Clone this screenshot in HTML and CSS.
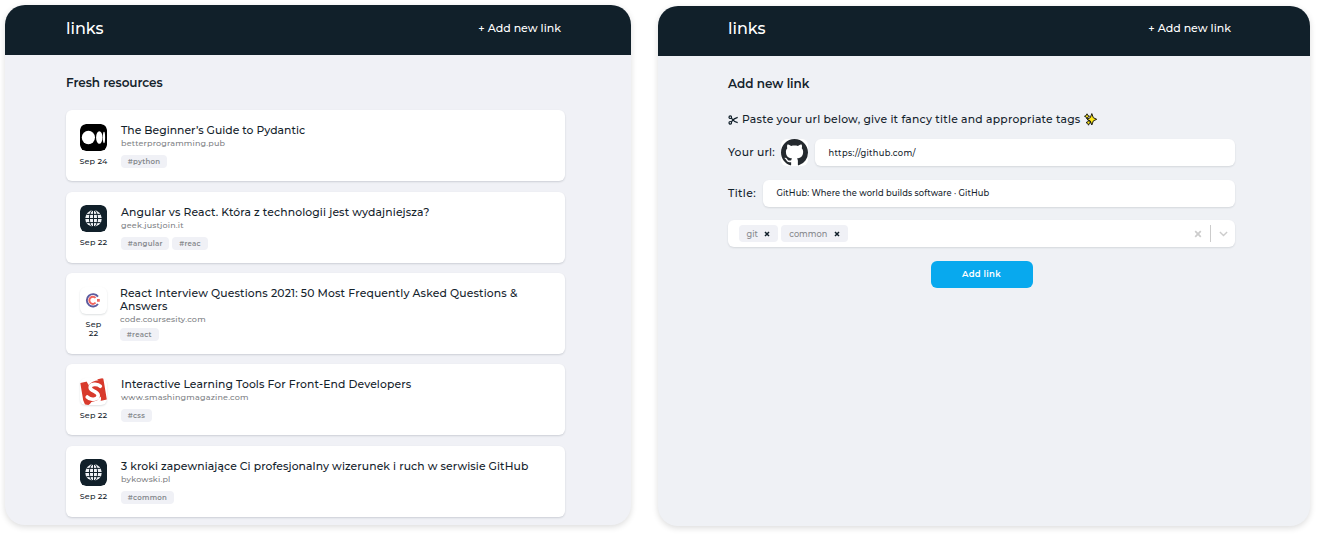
FILE: index.html
```html
<!DOCTYPE html>
<html lang="en">
<head>
<meta charset="utf-8">
<title>links</title>
<link rel="stylesheet" href="styles.css">
</head>
<body>
<svg width="0" height="0" class="defs">
  <symbol id="globe" viewBox="0 0 27 27">
    <rect width="27" height="27" rx="6" fill="#11202a"/>
    <circle cx="13.5" cy="13.5" r="8.3" fill="#f0f2f6"/>
    <g fill="none" stroke="#11202a" stroke-width="1">
      <path d="M13.5 5v17M5 13.5h17M6.5 9.4h14M6.5 17.6h14"/>
      <ellipse cx="13.5" cy="13.5" rx="4.1" ry="8.6"/>
    </g>
  </symbol>
</svg>
<main class="stage">
  <section class="panel panel-list">
    <header class="bar"><span class="logo">links</span><a class="add">+ Add new link</a></header>
    <div class="body">
      <h1 class="heading heading-fresh">Fresh resources</h1>
      <div class="cards">
        <article class="card">
          <div class="side">
            <svg class="icon" viewBox="0 0 27 27"><rect width="27" height="27" rx="6"/><g fill="#fff"><ellipse cx="8.4" cy="13.5" rx="6.6" ry="6.7"/><ellipse cx="19.3" cy="13.5" rx="3.2" ry="6.3"/><ellipse cx="24" cy="13.5" rx="1.1" ry="5.7"/></g></svg>
            <span class="date">Sep 24</span>
          </div>
          <div class="info"><h2 class="title t-beginner">The Beginner’s Guide to Pydantic</h2><span class="host">betterprogramming.pub</span><div class="tags"><span class="tag">#python</span></div></div>
        </article>
        <article class="card">
          <div class="side"><svg class="icon"><use href="#globe"/></svg><span class="date">Sep 22</span></div>
          <div class="info"><h2 class="title t-angular">Angular vs React. Która z technologii jest wydajniejsza?</h2><span class="host">geek.justjoin.it</span><div class="tags"><span class="tag">#angular</span><span class="tag">#reac</span></div></div>
        </article>
        <article class="card card-tall">
          <div class="side">
            <svg class="icon icon-light" viewBox="0 0 27 27"><g fill="none"><path d="M18 9.600A6.200 6.200 0 1 0 18 17" stroke="#5c5b9e" stroke-width="1.900"/><path d="M15.600 10.900A3.600 3.600 0 1 0 15.600 15.700" stroke="#f0645f" stroke-width="2"/></g><path d="M17 12h2.800v2.800H17z" fill="#f0645f"/></svg>
            <span class="date">Sep<br>22</span>
          </div>
          <div class="info"><h2 class="title t-react">React Interview Questions 2021: 50 Most Frequently Asked Questions &amp;<br>Answers</h2><span class="host">code.coursesity.com</span><div class="tags"><span class="tag">#react</span></div></div>
        </article>
        <article class="card">
          <div class="side">
            <svg class="icon icon-light" viewBox="0 0 27 27"><path d="M.3 5L20 .8Q22 0 23.200 0L24 4.500 26.800 21.500 11 25 8.500 27 5 26.500 3.200 22.300z" fill="#d83a2c"/><path d="M6.500 3.200L16.500 .8 18.500 2.200Q12 3 8.500 7zM10.500 26L20.500 23.500Q21.500 21 20.800 18.500L17 22.500 11 24.200z" fill="#fff"/><path d="M20.300 8.300C17.500 5.300 10 5.800 10.200 9.600 10.400 13.400 18.200 13 18.200 17.600 18.200 22 10.500 22.600 7.200 19" fill="none" stroke="#fff" stroke-width="3.600" stroke-linecap="round"/></svg>
            <span class="date">Sep 22</span>
          </div>
          <div class="info"><h2 class="title t-tools">Interactive Learning Tools For Front-End Developers</h2><span class="host">www.smashingmagazine.com</span><div class="tags"><span class="tag">#css</span></div></div>
        </article>
        <article class="card">
          <div class="side"><svg class="icon"><use href="#globe"/></svg><span class="date">Sep 22</span></div>
          <div class="info"><h2 class="title t-kroki">3 kroki zapewniające Ci profesjonalny wizerunek i ruch w serwisie GitHub</h2><span class="host">bykowski.pl</span><div class="tags"><span class="tag">#common</span></div></div>
        </article>
      </div>
    </div>
  </section>

  <section class="panel panel-form">
    <header class="bar"><span class="logo">links</span><a class="add">+ Add new link</a></header>
    <div class="body">
      <h1 class="heading heading-new">Add new link</h1>
      <p class="intro">
        <svg class="scissors" viewBox="0 0 10 10" fill="none" stroke="#11202a" stroke-width="1.200"><circle cx="2.300" cy="2.200" r="1.300"/><circle cx="2.300" cy="7.800" r="1.300"/><path d="M3.300 3.100Q6 6.800 9.700 7.600M3.300 6.900Q6 3.200 9.700 2.400"/></svg>
        <span class="intro-text">Paste your url below, give it fancy title and appropriate tags</span>
        <svg class="sparkles" viewBox="0 0 13 13" stroke="#1c1c10" stroke-width="1" fill="#ffe81a"><path d="M3 .8l.8 1.700 1.700.8-1.700.8L3 6 2.200 4.100.5 3.300l1.700-.8z"/><path d="M4.500 7.200l.8 1.600 1.700.8-1.700.8-.8 1.800-.8-1.800L2 9.600l1.700-.8z"/><path d="M7.800.6L9.300 4.700 12.700 6.300 9.300 7.900 7.800 12 6.300 7.900 3 6.300 6.300 4.700z"/></svg>
      </p>
      <div class="row">
        <label class="label l-url">Your url:</label>
        <svg class="github" viewBox="0 0 27 27"><rect width="27" height="27" rx="6" fill="#fff"/><path transform="scale(1.6875)" fill="#24292e" fill-rule="evenodd" d="M8 0C3.580 0 0 3.580 0 8c0 3.540 2.290 6.530 5.470 7.590.4.070.55-.17.55-.38 0-.19-.010-.82-.010-1.490-2.010.37-2.530-.49-2.690-.94-.09-.23-.48-.94-.82-1.130-.28-.15-.68-.52-.010-.53.63-.010 1.080.58 1.230.82.72 1.210 1.870.87 2.330.66.070-.52.28-.87.51-1.070-1.780-.2-3.640-.89-3.640-3.950 0-.87.31-1.590.82-2.150-.08-.2-.36-1.020.08-2.120 0 0 .67-.21 2.200.82.64-.18 1.320-.27 2-.27.68 0 1.360.09 2 .27 1.530-1.040 2.200-.82 2.200-.82.44 1.100.16 1.920.08 2.120.51.56.82 1.270.82 2.150 0 3.070-1.870 3.750-3.650 3.950.29.25.54.73.54 1.480 0 1.070-.010 1.930-.010 2.200 0 .21.15.46.55.38A8.013 8.013 0 0 0 16 8c0-4.420-3.580-8-8-8z"/></svg>
        <div class="field"><span class="v-url">https://github.com/</span></div>
      </div>
      <div class="row">
        <label class="label l-title">Title:</label>
        <div class="field"><span class="v-title">GitHub: Where the world builds software · GitHub</span></div>
      </div>
      <div class="field select">
        <span class="chip">git<svg viewBox="0 0 6 6"><path d="M1 1l4 4M5 1L1 5"/></svg></span>
        <span class="chip">common<svg viewBox="0 0 6 6"><path d="M1 1l4 4M5 1L1 5"/></svg></span>
        <div class="controls">
          <svg class="clear" viewBox="0 0 8 8"><path d="M1.200 1.200l5.600 5.600M6.800 1.200L1.200 6.800"/></svg>
          <i class="divider"></i>
          <svg class="chevron" viewBox="0 0 9 6"><path d="M.9 1l3.600 3.500L8.100 1"/></svg>
        </div>
      </div>
      <button class="submit">Add link</button>
    </div>
  </section>
</main>
</body>
</html>
```
FILE: styles.css
```css
* { box-sizing: border-box; }
body { margin: 0; background: #fff; color: #14232c; font-family: Montserrat, Inter, "Noto Sans", sans-serif; font-weight: 500; overflow: hidden; }
.defs { position: absolute; }
.stage { display: flex; gap: 27px; padding: 5px 0 0 5px; height: 540px; align-items: flex-start; }
.panel { height: 520px; border-radius: 20px; overflow: hidden; background: #f0f1f6; box-shadow: 0 2px 6px rgba(0, 0, 0, .14); }
.panel-list { width: 626px; }
.panel-form { width: 652px; margin-top: 1px; background: #eff1f5; }
.bar { height: 50px; background: #11202a; color: #fff; display: flex; align-items: center; justify-content: space-between; padding: 0 70px 4px 61px; }
.panel-form .bar { height: 49.500px; padding: 0 79px 6px 70px; }
.logo { font-size: 16px; line-height: 20px; padding-top: 2px; }
.add { font-size: 11px; line-height: 14px; }
.body { padding: 19px 66px 0 61px; }
.panel-form .body { padding: 19.500px 75px 0 70px; }
.heading { margin: 0; font-size: 12px; line-height: 17px; font-weight: 600; }
.heading-fresh { letter-spacing: -.06px; }
.cards { display: flex; flex-direction: column; gap: 10.500px; margin-top: 19.300px; }
.card { height: 71px; width: 499px; border-radius: 6px; background: #fff; box-shadow: 0 1px 2px rgba(17, 32, 42, .16); display: flex; padding: 13.500px 0 0 14px; }
.card-tall { height: 80.500px; }
.side { width: 27px; display: flex; flex-direction: column; align-items: center; }
.icon { width: 27px; height: 27px; display: block; flex: none; border-radius: 6px; }
.icon-light { box-shadow: 0 1px 2px rgba(17, 32, 42, .14); }
.date { font-size: 8px; line-height: 9.500px; margin-top: 6px; white-space: nowrap; text-align: center; letter-spacing: .15px; }
.info { padding: .5px 0 0 14px; }
.card-tall .info { padding-left: 13px; }
.title { margin: 0; font-size: 10.800px; line-height: 13px; font-weight: 500; white-space: nowrap; }
.t-beginner { letter-spacing: .03px; }
.t-angular { letter-spacing: .13px; }
.t-react { letter-spacing: .15px; }
.t-tools { letter-spacing: .11px; }
.t-kroki { letter-spacing: .09px; }
.host { display: block; font-size: 8px; line-height: 12px; color: #7d8084; white-space: nowrap; letter-spacing: .2px; }
.tags { display: flex; gap: 3px; margin-top: 6px; }
.tag { height: 13px; border-radius: 4px; background: #f0f1f6; color: #85888c; font-size: 7px; font-weight: 600; line-height: 13px; padding: 0 6.800px; letter-spacing: .25px; }
.card-tall .tags { margin-top: 2.500px; }
.intro { display: flex; align-items: center; margin: 19px 0 0; height: 17px; font-size: 10.800px; }
.intro-text { white-space: nowrap; margin-left: 4px; letter-spacing: .22px; }
.scissors { width: 10px; height: 10px; }
.sparkles { width: 13px; height: 13px; margin-left: 4px; }
.row { display: flex; align-items: center; height: 27px; margin-top: 11px; }
.row + .row { margin-top: 13.500px; }
.label { font-size: 10.800px; white-space: nowrap; letter-spacing: .22px; }
.github { width: 27px; height: 27px; margin: 0 7px 0 6px; flex: none; }
.l-title { margin-right: 7px; letter-spacing: .35px; }
.field { flex: 1; height: 27px; border-radius: 6px; background: #fff; box-shadow: 0 1px 2px rgba(17, 32, 42, .12); display: flex; align-items: center; padding: 0 13.500px; font-size: 8.300px; white-space: nowrap; }
.v-url { letter-spacing: .34px; }
.v-title { letter-spacing: .09px; }
.select { margin-top: 13.500px; padding: 0 7.500px 0 10.500px; gap: 3px; }
.chip { display: flex; align-items: center; gap: 6.500px; height: 16.500px; border-radius: 4px; background: #f0f1f6; color: #85888c; font-size: 8.200px; padding: 0 8px; }
.chip svg { width: 6px; height: 6px; fill: none; stroke: #11202a; stroke-width: 1.500; }
.controls { margin-left: auto; display: flex; align-items: center; }
.controls svg { fill: none; stroke: #ccc; stroke-width: 1.700; }
.clear { width: 8px; height: 8px; }
.divider { width: 1px; height: 16.500px; background: #ccc; margin: 0 8px; }
.controls .chevron { width: 9px; height: 6px; stroke-width: 1.400; }
.submit { display: block; width: 102px; height: 27px; margin: 13.500px auto 0; border: 0; border-radius: 6px; background: #08a9ee; color: #fff; font: 600 8.500px Montserrat, Inter, sans-serif; letter-spacing: .3px; }
```
